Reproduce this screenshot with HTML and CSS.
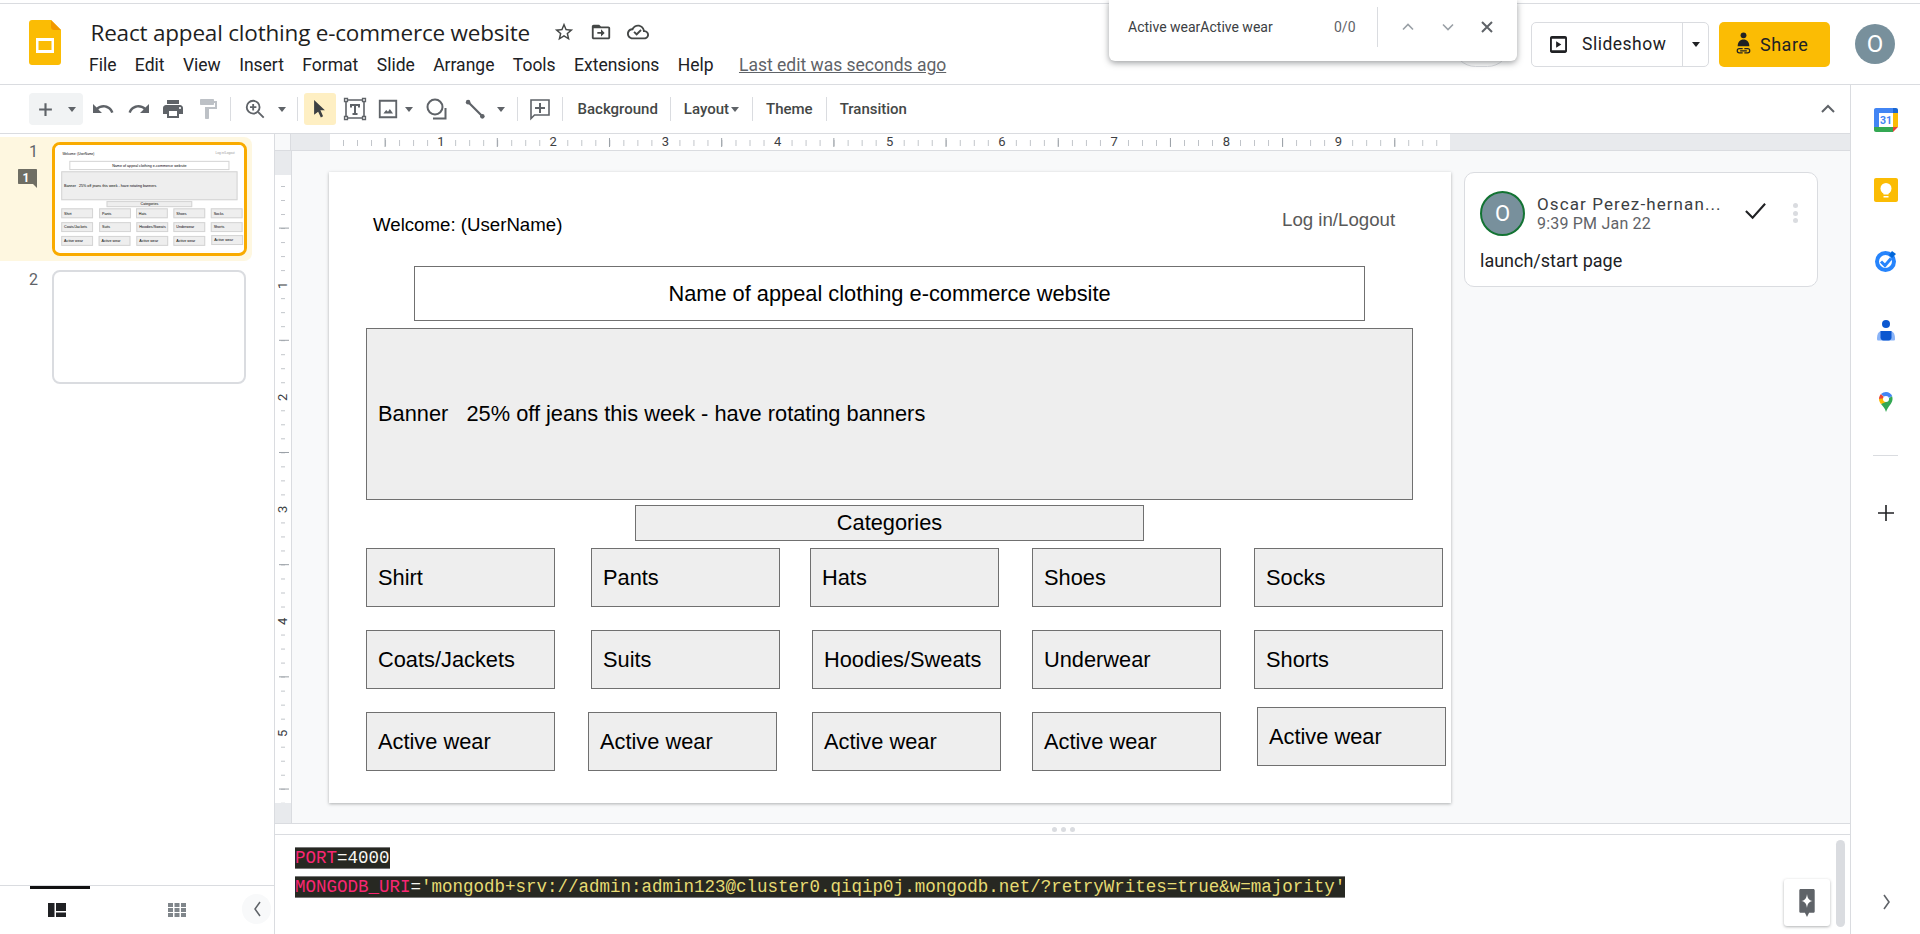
FILE: index.html
```html
<!DOCTYPE html>
<html lang="en">
<head>
  <meta charset="UTF-8" />
  <meta name="viewport" content="width=device-width, initial-scale=1" />
  <title>React appeal clothing e-commerce website - Google Slides</title>
  <link rel="stylesheet" href="styles.css">
</head>
<body>
  <header class="header">
    <svg class="logo" viewBox="0 0 32 45"><path fill="#fbbc04" d="M3 0h19l10 10v32c0 1.700-1.300 3-3 3H3c-1.700 0-3-1.300-3-3V3c0-1.700 1.300-3 3-3z"/><path fill="#f29900" d="M22 0v7c0 1.700 1.300 3 3 3h7z"/><path fill="#fff" d="M7 18h18v15H7zm2.500 3v9h13v-9z"/></svg>
    <div class="doc">
      <div class="doc-title">
        <span class="doc-name">React appeal clothing e-commerce website</span>
        <svg class="doc-icon" viewBox="0 0 24 24"><path fill="#444746" d="M22 9.240l-7.190-.620L12 2 9.190 8.630 2 9.240l5.460 4.730L5.820 21 12 17.270 18.180 21l-1.630-7.030L22 9.240zM12 15.400l-3.760 2.270 1-4.280-3.320-2.880 4.380-.380L12 6.100l1.710 4.040 4.380.380-3.320 2.880 1 4.280L12 15.400z"/></svg>
        <svg class="doc-icon" viewBox="0 0 24 24"><path fill="#444746" d="M20 6h-8l-2-2H4c-1.100 0-2 .900-2 2v12c0 1.100.900 2 2 2h16c1.100 0 2-.900 2-2V8c0-1.100-.900-2-2-2zm0 12H4V8h16v10zm-8-1l4-4-4-4v3H8v2h4v3z"/></svg>
        <svg class="doc-icon" viewBox="0 0 24 24"><path fill="#444746" d="M19.350 10.040C18.670 6.590 15.640 4 12 4 9.110 4 6.600 5.640 5.350 8.040 2.340 8.360 0 10.910 0 14c0 3.310 2.690 6 6 6h13c2.760 0 5-2.240 5-5 0-2.640-2.050-4.780-4.650-4.960zM19 18H6c-2.210 0-4-1.790-4-4s1.790-4 4-4h.710C7.370 7.690 9.480 6 12 6c3.040 0 5.500 2.460 5.500 5.500v.500H19c1.660 0 3 1.340 3 3s-1.340 3-3 3zm-8.500-2L7 12.500l1.400-1.400 2.100 2.100 4.100-4.100L16 10.500 10.500 16z"/></svg>
      </div>
      <nav class="menu">
        <span>File</span><span>Edit</span><span>View</span><span>Insert</span><span>Format</span><span>Slide</span><span>Arrange</span><span>Tools</span><span>Extensions</span><span>Help</span>
        <a class="last-edit">Last edit was seconds ago</a>
      </nav>
    </div>
    <div class="header-right">
      <div class="comment-hist"></div>
      <div class="slideshow">
        <span class="slideshow-main">
          <svg class="slideshow-icon" viewBox="0 0 18 18"><path fill="#202124" d="M2 0h14c1.100 0 2 .900 2 2v14c0 1.100-.900 2-2 2H2c-1.100 0-2-.900-2-2V2C0 .900.900 0 2 0zm0 3v12h14V3zm4.500 2.500L12 9l-5.500 3.500z"/></svg>
          Slideshow
        </span>
        <span class="slideshow-drop"><i class="caret caret-dark"></i></span>
      </div>
      <div class="share">
        <svg class="share-icon" viewBox="0 0 20 30"><circle cx="10" cy="4" r="3.500" fill="#202124"/><path fill="#202124" d="M3 17c0-5 3-8 7-8s7 3 7 8z"/><path fill="none" stroke="#202124" stroke-width="1.500" d="M9 20H5a2.500 2.500 0 0 0 0 5h4M11 20h4a2.500 2.500 0 0 1 0 5h-4M6 22.500h8"/></svg>
        Share
      </div>
      <div class="avatar">O</div>
    </div>
    <div class="find-popup">
      <span class="find-text">Active wearActive wear</span>
      <span class="find-count">0/0</span>
      <span class="find-sep"></span>
      <svg class="find-arrow" viewBox="0 0 14 14"><path fill="none" stroke="#9aa0a6" stroke-width="1.600" d="M2 9.500l5-5 5 5"/></svg>
      <svg class="find-arrow" viewBox="0 0 14 14"><path fill="none" stroke="#9aa0a6" stroke-width="1.600" d="M2 4.500l5 5 5-5"/></svg>
      <svg class="find-close" viewBox="0 0 14 14"><path fill="none" stroke="#5f6368" stroke-width="2" d="M2 2l10 10M12 2L2 12"/></svg>
    </div>
  </header>

  <div class="app">
    <div class="workspace">
      <div class="toolbar">
        <div class="add-btn">
          <svg class="ic-add" viewBox="0 0 16 16"><path fill="#5f6368" d="M7 2h2v5h5v2H9v5H7V9H2V7h5z"/></svg>
          <i class="caret"></i>
        </div>
        <svg class="ic ic-undo" viewBox="0 0 24 24"><path fill="#5f6368" d="M12.500 8c-2.650 0-5.050.990-6.900 2.600L2 7v9h9l-3.620-3.620c1.390-1.160 3.160-1.880 5.120-1.880 3.540 0 6.550 2.310 7.600 5.500l2.370-.780C21.080 11.030 17.150 8 12.500 8z"/></svg>
        <svg class="ic ic-redo" viewBox="0 0 24 24"><path fill="#5f6368" d="M18.400 10.600C16.550 8.990 14.150 8 11.500 8c-4.650 0-8.580 3.030-9.960 7.220L3.900 16c1.050-3.190 4.050-5.500 7.600-5.500 1.950 0 3.730.720 5.120 1.880L13 16h9V7l-3.600 3.600z"/></svg>
        <svg class="ic ic-print" viewBox="0 0 24 24"><path fill="#5f6368" d="M19 8H5c-1.660 0-3 1.340-3 3v6h4v4h12v-4h4v-6c0-1.660-1.340-3-3-3zm-3 11H8v-5h8v5zm3-7c-.550 0-1-.450-1-1s.450-1 1-1 1 .450 1 1-.450 1-1 1zm-1-9H6v4h12V3z"/></svg>
        <svg class="ic ic-paint" viewBox="0 0 24 24"><path fill="#bdc1c6" d="M18 4V3c0-.550-.450-1-1-1H5c-.550 0-1 .450-1 1v4c0 .550.450 1 1 1h12c.550 0 1-.450 1-1V6h1v4H9v11c0 .550.450 1 1 1h2c.550 0 1-.450 1-1v-9h8V4h-3z"/></svg>
        <span class="sep sep-a"></span>
        <svg class="ic ic-zoom" viewBox="0 0 24 24"><path fill="none" stroke="#5f6368" stroke-width="2" d="M15.500 15.500L21.500 21.500M10 6.500v7M6.500 10h7"/><circle cx="10" cy="10" r="7" fill="none" stroke="#5f6368" stroke-width="2"/></svg>
        <i class="caret caret-zoom"></i>
        <span class="sep sep-b"></span>
        <div class="select-btn">
          <svg class="ic-cursor" viewBox="0 0 14 20"><path fill="#3c4043" d="M1 0l12 11.500H8l3 6.500-2.500 1.500L5.500 13 1 16.500z"/></svg>
        </div>
        <svg class="ic ic-text" viewBox="0 0 24 24"><path fill="none" stroke="#5f6368" stroke-width="1.600" d="M4 3h16M4 21h16M3 4v16M21 4v16"/><path fill="#5f6368" d="M7 7h10v3.500h-2V9h-2v7h1.500v2h-5v-2H11V9H9v1.500H7z"/><path fill="#fff" stroke="#5f6368" stroke-width="1.300" d="M1.500 1.500h3v3h-3zM19.500 1.500h3v3h-3zM1.500 19.500h3v3h-3zM19.500 19.500h3v3h-3z"/></svg>
        <svg class="ic ic-image" viewBox="0 0 24 24"><path fill="none" stroke="#5f6368" stroke-width="2" d="M3 3h18v18H3z"/><path fill="#5f6368" d="M7 17l3-4 2 2 2-3 3.500 5z"/></svg>
        <i class="caret caret-image"></i>
        <svg class="ic ic-shape" viewBox="0 0 24 24"><circle cx="10" cy="10" r="7.500" fill="none" stroke="#5f6368" stroke-width="2"/><path fill="none" stroke="#5f6368" stroke-width="2" d="M20.500 11v10.500H8"/></svg>
        <svg class="ic ic-line" viewBox="0 0 24 24"><path fill="none" stroke="#5f6368" stroke-width="2.400" d="M5 5l15 15"/><circle cx="4.500" cy="4.500" r="2.500" fill="#5f6368"/><circle cx="20" cy="20" r="2.500" fill="#5f6368"/></svg>
        <i class="caret caret-line"></i>
        <span class="sep sep-c"></span>
        <svg class="ic ic-comment" viewBox="0 0 24 24"><path fill="none" stroke="#5f6368" stroke-width="1.600" d="M3 3h18v15H6.500L3 21.500z"/><path fill="#5f6368" d="M11 6h2v4h4v2h-4v4h-2v-4H7v-2h4z"/></svg>
        <span class="sep sep-d"></span>
        <span class="tb-label tb-background">Background</span>
        <span class="sep"></span>
        <span class="tb-label tb-layout">Layout</span>
        <i class="caret caret-layout"></i>
        <span class="sep sep-e"></span>
        <span class="tb-label">Theme</span>
        <span class="sep"></span>
        <span class="tb-label">Transition</span>
        <svg class="collapse" viewBox="0 0 16 16"><path fill="none" stroke="#5f6368" stroke-width="2" d="M2 11l6-6 6 6"/></svg>
      </div>

      <div class="main">
        <aside class="filmstrip">
          <div class="film-list">
            <div class="film-row film-row-active">
              <div class="film-num">
                <span>1</span>
                <svg class="film-badge" viewBox="0 0 19 19"><path fill="#6f6e64" d="M1 0h17c.600 0 1 .400 1 1v18l-4-4H1c-.600 0-1-.400-1-1V1c0-.600.400-1 1-1z"/><text x="8" y="12.500" class="film-badge-text">1</text></svg>
              </div>
              <div class="thumb thumb-active">
                <div class="slide thumb-slide">
                  <span class="free welcome">Welcome: (UserName)</span>
                  <span class="free login">Log in/Logout</span>
                  <div class="shape site-name center">Name of appeal clothing e-commerce website</div>
                  <div class="shape grey banner">Banner   25% off jeans this week - have rotating banners</div>
                  <div class="shape grey categories center">Categories</div>
                  <div class="shape grey cell r1 c1">Shirt</div>
                  <div class="shape grey cell r1 c2">Pants</div>
                  <div class="shape grey cell r1 c3">Hats</div>
                  <div class="shape grey cell r1 c4">Shoes</div>
                  <div class="shape grey cell r1 c5">Socks</div>
                  <div class="shape grey cell r2 c1">Coats/Jackets</div>
                  <div class="shape grey cell r2 c2">Suits</div>
                  <div class="shape grey cell r2 c3b">Hoodies/Sweats</div>
                  <div class="shape grey cell r2 c4">Underwear</div>
                  <div class="shape grey cell r2 c5">Shorts</div>
                  <div class="shape grey cell r3 c1">Active wear</div>
                  <div class="shape grey cell r3 c2b">Active wear</div>
                  <div class="shape grey cell r3 c3b">Active wear</div>
                  <div class="shape grey cell r3 c4">Active wear</div>
                  <div class="shape grey cell r3b c5b">Active wear</div>
                </div>
              </div>
            </div>
            <div class="film-row">
              <div class="film-num"><span>2</span></div>
              <div class="thumb"></div>
            </div>
          </div>
          <div class="film-foot">
            <span class="film-tab-bar"></span>
            <svg class="film-view film-view-a" viewBox="0 0 18 14"><path fill="#202124" d="M0 0h6.500v14H0zM8 0h10v8H8zM8 9.500h10V14H8z"/></svg>
            <svg class="film-view film-view-b" viewBox="0 0 18 14"><path fill="#80868b" d="M0 0h5v4H0zM6.500 0h5v4h-5zM13 0h5v4h-5zM0 5h5v4H0zM6.500 5h5v4h-5zM13 5h5v4h-5zM0 10h5v4H0zM6.500 10h5v4h-5zM13 10h5v4h-5z"/></svg>
            <span class="film-collapse"><svg viewBox="0 0 10 18"><path fill="none" stroke="#5f6368" stroke-width="1.500" d="M8 2L3 9l5 7"/></svg></span>
          </div>
        </aside>

        <section class="editor">
          <div class="ruler-h">
            <span class="ruler-corner"></span>
            <div class="ruler-h-track">
              <span>1</span><span>2</span><span>3</span><span>4</span><span>5</span><span>6</span><span>7</span><span>8</span><span>9</span>
            </div>
          </div>
          <div class="editor-body">
            <div class="ruler-v">
              <span>1</span><span>2</span><span>3</span><span>4</span><span>5</span>
            </div>
            <div class="canvas">
              <div class="slide">
                <span class="free welcome">Welcome: (UserName)</span>
                <span class="free login">Log in/Logout</span>
                <div class="shape site-name center">Name of appeal clothing e-commerce website</div>
                <div class="shape grey banner">Banner   25% off jeans this week - have rotating banners</div>
                <div class="shape grey categories center">Categories</div>
                <div class="shape grey cell r1 c1">Shirt</div>
                <div class="shape grey cell r1 c2">Pants</div>
                <div class="shape grey cell r1 c3">Hats</div>
                <div class="shape grey cell r1 c4">Shoes</div>
                <div class="shape grey cell r1 c5">Socks</div>
                <div class="shape grey cell r2 c1">Coats/Jackets</div>
                <div class="shape grey cell r2 c2">Suits</div>
                <div class="shape grey cell r2 c3b">Hoodies/Sweats</div>
                <div class="shape grey cell r2 c4">Underwear</div>
                <div class="shape grey cell r2 c5">Shorts</div>
                <div class="shape grey cell r3 c1">Active wear</div>
                <div class="shape grey cell r3 c2b">Active wear</div>
                <div class="shape grey cell r3 c3b">Active wear</div>
                <div class="shape grey cell r3 c4">Active wear</div>
                <div class="shape grey cell r3b c5b">Active wear</div>
              </div>
              <div class="comment">
                <div class="comment-head">
                  <div class="comment-avatar"><span>O</span></div>
                  <div class="comment-who">
                    <div class="comment-name">Oscar Perez-hernan...</div>
                    <div class="comment-time">9:39 PM Jan 22</div>
                  </div>
                  <svg class="comment-check" viewBox="0 0 24 24"><path fill="none" stroke="#202124" stroke-width="2.200" d="M2 12.500L9 19.500 22 5"/></svg>
                  <span class="comment-more"><i></i><i></i><i></i></span>
                </div>
                <div class="comment-body">launch/start page</div>
              </div>
            </div>
          </div>
          <div class="resizer"><i></i><i></i><i></i></div>
          <div class="notes">
            <p class="note-line"><span class="k">PORT</span>=4000</p>
            <p class="note-line"><span class="k">MONGODB_URI</span>=<span class="v">'mongodb+srv://admin:admin123@cluster0.qiqip0j.mongodb.net/?retryWrites=true&amp;w=majority'</span></p>
            <span class="notes-scroll"></span>
            <span class="notes-fab">
              <svg viewBox="0 0 22 40"><path fill="#5f6368" d="M2 0h18c1.100 0 2 .900 2 2v30c0 1.100-.900 2-2 2h-6l-3 6-3-6H2c-1.100 0-2-.900-2-2V2C0 .900.900 0 2 0z"/><path fill="#fff" d="M11 7c.800 6 2.500 9 8 10-5.500 1-7.200 4-8 10-.800-6-2.500-9-8-10 5.500-1 7.200-4 8-10z"/></svg>
            </span>
          </div>
        </section>
      </div>
    </div>

    <aside class="sidebar">
      <svg class="side-icon side-cal" viewBox="0 0 24 24"><path fill="#4285f4" d="M2 0h17v5H5v14H0V2C0 .900.900 0 2 0z"/><path fill="#1967d2" d="M19 0h3c1.100 0 2 .900 2 2v3h-5z"/><path fill="#fbbc04" d="M19 5h5v14h-5z"/><path fill="#34a853" d="M0 19h19v5H2c-1.100 0-2-.900-2-2z"/><path fill="#ea4335" d="M19 24v-5h5z"/><path fill="#fff" d="M5 5h14v14H5z"/><text x="12" y="16" class="side-cal-text">31</text></svg>
      <svg class="side-icon side-keep" viewBox="0 0 24 24"><path fill="#fbbc04" d="M2 0h20c1.100 0 2 .900 2 2v20c0 1.100-.900 2-2 2H2c-1.100 0-2-.900-2-2V2C0 .900.900 0 2 0z"/><circle cx="12" cy="10.500" r="5.500" fill="#fff"/><path fill="#fff" d="M9.500 14h5v2.500h-5zM9.500 18h5v1.500h-5z"/></svg>
      <svg class="side-icon side-tasks" viewBox="0 0 24 24"><circle cx="11.500" cy="12.500" r="8.500" fill="none" stroke="#2684fc" stroke-width="4"/><path fill="none" stroke="#2684fc" stroke-width="3" d="M7 12.500l4 4 6-7"/><path fill="#0066da" d="M18 2l4 3-4 4-3-3z"/></svg>
      <svg class="side-icon side-contacts" viewBox="0 0 24 24"><circle cx="12" cy="5" r="4" fill="#0b57d0"/><path fill="#8ab4f8" d="M3 20c0-4 1-8 5-8h8c4 0 5 4 5 8 0 1-.500 1.500-1.500 1.500h-15C3.500 21.500 3 21 3 20z"/><path fill="#0b57d0" d="M6.500 12h11v6.500c0 1.500-1 3-3 3h-5c-2 0-3-1.500-3-3z"/></svg>
      <svg class="side-icon side-maps" viewBox="0 0 24 24"><path fill="#34a853" d="M12 24c-1-4-3.500-6-5-8l11-8c1.500 4-.500 7-2 9-1.500 2-3 4-4 7z"/><path fill="#fbbc04" d="M7 16c-1-1.300-2-3-2-5l4-2 3 5z"/><path fill="#ea4335" d="M5 11c0-2 .800-3.600 2-4.900L11 10z"/><path fill="#4285f4" d="M7 6.100C8.500 4.700 10.200 4 12 4c3 0 5.200 1.700 6.200 4L13 11z"/><circle cx="12" cy="11" r="3" fill="#fff"/></svg>
      <span class="side-sep"></span>
      <svg class="side-plus" viewBox="0 0 16 16"><path fill="#202124" d="M7.200 0h1.600v7.200H16v1.600H8.800V16H7.200V8.800H0V7.200h7.200z"/></svg>
      <svg class="side-expand" viewBox="0 0 10 18"><path fill="none" stroke="#5f6368" stroke-width="1.600" d="M2 2l5 7-5 7"/></svg>
    </aside>
  </div>
</body>
</html>
```

FILE: styles.css
```css
* {
  box-sizing: border-box;
}
html, body {
  margin: 0;
  height: 934px;
  overflow: hidden;
}
body {
  font-family: Roboto, 'Noto Sans', sans-serif;
  color: #202124;
  background: #fff;
  padding-top: 3px;
  display: flex;
  flex-direction: column;
}

/* top header */
.header {
  position: relative;
  flex: none;
  height: 82px;
  border-top: 1px solid #dadce0;
  border-bottom: 1px solid #dadce0;
  display: flex;
  align-items: center;
  padding-left: 29px;
}
.logo {
  width: 32px;
  height: 45px;
  flex: none;
  margin-top: -4px;
}
.doc {
  margin-left: 28px;
  align-self: flex-start;
}
.doc-title {
  height: 28px;
  margin-top: 14px;
  display: flex;
  align-items: center;
}
.doc-name {
  font-family: 'Open Sans', sans-serif;
  font-size: 22.5px;
  letter-spacing: -0.2px;
  margin-left: 1.5px;
  color: #1f1f1f;
}
.doc-icon {
  width: 22px;
  height: 22px;
  margin-left: 15px;
}
.doc-name + .doc-icon {
  margin-left: 23px;
}
.menu {
  display: flex;
  align-items: center;
  gap: 18.4px;
  height: 24px;
  margin-top: 7px;
  font-size: 17.5px;
}
.last-edit {
  margin-left: 7px;
  color: #5f6368;
  text-decoration: underline;
}
.header-right {
  margin-left: auto;
  display: flex;
  align-items: center;
  padding-right: 25px;
  position: relative;
}
.comment-hist {
  position: absolute;
  left: -78px;
  top: 0;
  width: 57px;
  height: 45px;
  border: 1px solid #dadce0;
  border-radius: 28px;
}
.slideshow {
  width: 178px;
  height: 45px;
  display: flex;
  border: 1px solid #dadce0;
  border-radius: 5px;
  font-size: 17.5px;
}
.slideshow-main {
  width: 151px;
  display: flex;
  align-items: center;
  letter-spacing: 0.5px;
  padding-left: 18px;
  gap: 15px;
  border-right: 1px solid #dadce0;
}
.slideshow-icon {
  width: 17px;
  height: 17px;
}
.slideshow-drop {
  flex: 1;
  display: flex;
  align-items: center;
  justify-content: center;
}
.share {
  width: 111px;
  height: 45px;
  margin-left: 10px;
  background: #fbbc04;
  border-radius: 5px;
  display: flex;
  align-items: center;
  font-size: 18px;
  letter-spacing: 0.5px;
  padding-left: 16px;
  gap: 8px;
}
.share-icon {
  width: 17px;
  height: 25px;
}
.avatar {
  width: 40px;
  height: 40px;
  margin-left: 25px;
  border-radius: 50%;
  background: #78909c;
  color: #fff;
  font-size: 24px;
  display: flex;
  align-items: center;
  justify-content: center;
}

/* find popup lies over the header */
.find-popup {
  position: absolute;
  left: 1109px;
  top: -4px;
  width: 408px;
  height: 61px;
  background: #fff;
  border-radius: 0 0 6px 6px;
  box-shadow: 0 2px 6px rgba(60, 64, 67, 0.5);
  display: flex;
  align-items: center;
  padding: 0 0 7px 19px;
  font-size: 14px;
  z-index: 5;
}
.find-text {
  width: 206px;
  color: #3c4043;
}
.find-count {
  width: 43px;
  color: #5f6368;
}
.find-sep {
  width: 1px;
  height: 40px;
  background: #dadce0;
}
.find-arrow {
  width: 14px;
  height: 14px;
  margin-left: 23px;
}
.find-arrow + .find-arrow {
  margin-left: 26px;
}
.find-close {
  width: 14px;
  height: 14px;
  margin-left: 25px;
}

/* page below the header */
.app {
  flex: 1;
  min-height: 0;
  display: flex;
}
.workspace {
  width: 1850px;
  flex: none;
  display: flex;
  flex-direction: column;
  min-height: 0;
}

/* toolbar */
.toolbar {
  flex: none;
  height: 49px;
  border-bottom: 1px solid #dadce0;
  display: flex;
  align-items: center;
  padding-left: 29px;
}
.add-btn {
  width: 54px;
  height: 32px;
  background: #f1f3f4;
  border-radius: 4px;
  display: flex;
  align-items: center;
  padding-left: 8px;
}
.ic-add {
  width: 17px;
  height: 17px;
}
.add-btn .caret {
  margin-left: 14px;
}
.ic {
  flex: none;
  width: 24px;
  height: 24px;
}
.caret {
  display: inline-block;
  width: 0;
  height: 0;
  flex: none;
  border-left: 4.5px solid transparent;
  border-right: 4.5px solid transparent;
  border-top: 5px solid #5f6368;
}
.caret-dark {
  border-top-color: #202124;
}
.ic-undo { margin-left: 8px; }
.ic-redo { margin-left: 12px; }
.ic-print { margin-left: 10px; }
.ic-paint { margin-left: 11px; }
.sep {
  flex: none;
  width: 1px;
  height: 24px;
  background: #dadce0;
  margin: 0 13px;
}
.sep-a { margin: 0 0 0 10px; }
.ic-zoom { margin-left: 13px; width: 22px; height: 22px; }
.caret-zoom { margin-left: 11.5px; }
.sep-b { margin: 0 0 0 11px; }
.select-btn {
  flex: none;
  width: 32px;
  height: 32px;
  margin-left: 6px;
  background: #feefc3;
  border-radius: 3px;
  display: flex;
  align-items: center;
  justify-content: center;
}
.ic-cursor {
  width: 13px;
  height: 18px;
}
.ic-text { margin-left: 7px; }
.ic-image { margin-left: 10px; width: 22px; height: 22px; }
.caret-image { margin-left: 6px; }
.ic-shape { margin-left: 12px; }
.ic-line { margin-left: 15px; width: 22px; height: 22px; }
.caret-line { margin-left: 11px; }
.sep-c { margin: 0 0 0 12px; }
.ic-comment { margin-left: 10.5px; }
.sep-d { margin: 0 15px 0 9.5px; }
.tb-label {
  font-size: 15px;
  font-weight: 500;
  color: #444746;
}
.tb-background { margin-right: -1px; }
.caret-layout { margin-left: 2px; }
.sep-e { margin: 0 13px 0 13px; }
.collapse {
  width: 16px;
  height: 16px;
  margin-left: auto;
  margin-right: 14px;
}

/* slide list */
.main {
  flex: 1;
  min-height: 0;
  display: flex;
}
.filmstrip {
  width: 274px;
  flex: none;
  display: flex;
  flex-direction: column;
}
.film-list {
  flex: 1;
  padding-top: 3px;
}
.film-row {
  width: 252px;
  height: 124px;
  display: flex;
  padding-top: 5px;
  border-radius: 0 8px 8px 0;
}
.film-row + .film-row {
  margin-top: 4px;
}
.film-row-active {
  background: #fef7e0;
}
.film-num {
  width: 52px;
  flex: none;
  font-size: 16px;
  color: #5f6368;
  position: relative;
  text-align: right;
  padding-right: 14px;
}
.film-num span {
  display: block;
  line-height: 20px;
}
.film-badge {
  position: absolute;
  left: 18px;
  top: 27px;
  width: 19px;
  height: 19px;
}
.film-badge-text {
  fill: #fff;
  font-size: 12px;
  font-weight: 700;
  text-anchor: middle;
  font-family: Roboto, sans-serif;
}
.thumb {
  flex: none;
  width: 194px;
  height: 114px;
  background: #fff;
  border: 2px solid #dadce0;
  border-radius: 8px;
  overflow: hidden;
}
.thumb-active {
  width: 195px;
  border: 3px solid #f9ab00;
}
.thumb-slide {
  transform: scale(0.1684);
  transform-origin: 0 0;
  box-shadow: none;
  color: #777;
}
.thumb-slide .shape {
  border: 6px solid #d4d4d4;
}
.thumb-slide .login {
  color: #999;
}
.film-foot {
  flex: none;
  position: relative;
  height: 49px;
  border-top: 1px solid #dadce0;
}
.film-tab-bar {
  position: absolute;
  left: 30px;
  top: 0;
  width: 60px;
  height: 3px;
  background: #111;
}
.film-view {
  position: absolute;
  top: 17px;
  width: 18px;
  height: 14px;
}
.film-view-a { left: 48px; }
.film-view-b { left: 168px; }
.film-collapse {
  position: absolute;
  left: 242px;
  top: 8px;
  width: 29px;
  height: 30px;
  border-radius: 15px;
  background: #f8f9fa;
  display: flex;
  align-items: center;
  justify-content: center;
}
.film-collapse svg {
  width: 10px;
  height: 18px;
}

/* editor */
.editor {
  flex: 1;
  min-width: 0;
  display: flex;
  flex-direction: column;
  border-left: 1px solid #dadce0;
}
.ruler-h {
  flex: none;
  height: 17px;
  display: flex;
  border-bottom: 1px solid #dadce0;
  background: #e8eaed;
}
.ruler-corner {
  width: 16px;
  flex: none;
  background: #f8f9fa;
  border-right: 1px solid #dadce0;
}
.ruler-h-track {
  margin-left: 39px;
  width: 1120px;
  padding-left: 104px;
  background-color: #fff;
  background-image:
    linear-gradient(90deg, transparent 55px, #9aa0a6 55px, #9aa0a6 56px, transparent 56px),
    linear-gradient(90deg, transparent 13px, #bdc1c6 13px, #bdc1c6 14px, transparent 14px);
  background-size: 112.2px 9px, 14.025px 6px;
  background-position: 0 4px, 0 6px;
  background-repeat: repeat-x;
  display: flex;
  align-items: center;
}
.ruler-h-track span {
  flex: none;
  width: 14px;
  margin-right: 98.2px;
  text-align: center;
  font-size: 13px;
  line-height: 16px;
  color: #3c4043;
  background: #fff;
}
.editor-body {
  flex: 1;
  min-height: 0;
  display: flex;
}
.ruler-v {
  width: 17px;
  flex: none;
  border-right: 1px solid #dadce0;
  background-color: #e8eaed;
  position: relative;
}
.ruler-v::before {
  content: "";
  position: absolute;
  left: 0;
  right: 0;
  top: 24px;
  height: 628px;
  background-color: #fff;
  background-image:
    linear-gradient(180deg, transparent 55px, #9aa0a6 55px, #9aa0a6 56px, transparent 56px),
    linear-gradient(180deg, transparent 13px, #bdc1c6 13px, #bdc1c6 14px, transparent 14px);
  background-size: 10px 112.2px, 4px 14.025px;
  background-position: 4px -2px, 6px -2px;
  background-repeat: no-repeat repeat;
}
.ruler-v span {
  position: absolute;
  left: 0;
  width: 16px;
  height: 14px;
  line-height: 16px;
  text-align: center;
  font-size: 13px;
  color: #3c4043;
  background: #fff;
  writing-mode: vertical-rl;
  transform: rotate(180deg);
}
.ruler-v span:nth-child(1) { top: 127px; }
.ruler-v span:nth-child(2) { top: 239px; }
.ruler-v span:nth-child(3) { top: 351px; }
.ruler-v span:nth-child(4) { top: 463px; }
.ruler-v span:nth-child(5) { top: 575px; }
.canvas {
  flex: 1;
  min-width: 0;
  background: #f8f9fa;
  display: flex;
  align-items: flex-start;
  padding: 21px 0 0 37px;
}

/* slide: a free canvas, shapes sit at their own coordinates */
.slide {
  position: relative;
  flex: none;
  width: 1122px;
  height: 631px;
  background: #fff;
  box-shadow: 0 1px 3px rgba(60, 64, 67, 0.4);
  font-family: 'Liberation Sans', Arial, sans-serif;
  font-size: 21.8px;
  color: #000;
}
.free {
  position: absolute;
  line-height: 24px;
  white-space: pre;
}
.welcome {
  left: 44px;
  top: 41px;
  font-size: 18.67px;
}
.login {
  left: 953px;
  top: 36px;
  font-size: 18.67px;
  color: #595959;
}
.shape {
  position: absolute;
  display: flex;
  align-items: center;
  padding-left: 11px;
  border: 1.5px solid #707070;
  white-space: pre;
}
.center {
  justify-content: center;
  padding-left: 0;
}
.grey {
  background: #eee;
}
.site-name { left: 85px; top: 94px; width: 951px; height: 55px; }
.banner { left: 37px; top: 156px; width: 1047px; height: 172px; }
.categories { left: 306px; top: 333px; width: 509px; height: 36px; }
.cell { width: 189px; height: 59px; }
.r1 { top: 376px; }
.r2 { top: 458px; }
.r3 { top: 540px; }
.r3b { top: 535px; }
.c1 { left: 37px; }
.c2 { left: 262px; }
.c2b { left: 259px; }
.c3 { left: 481px; }
.c3b { left: 483px; }
.c4 { left: 703px; }
.c5 { left: 925px; }
.c5b { left: 928px; }

/* comment card */
.comment {
  flex: none;
  width: 354px;
  height: 115px;
  margin-left: 13px;
  background: #fff;
  border: 1px solid #dadce0;
  border-radius: 10px;
  padding: 18px 14px 0 15px;
}
.comment-head {
  display: flex;
  align-items: flex-start;
}
.comment-avatar {
  width: 45px;
  height: 45px;
  flex: none;
  border-radius: 50%;
  border: 2px solid #137333;
  background: #78909c;
  color: #fff;
  font-size: 22px;
  display: flex;
  align-items: center;
  justify-content: center;
}
.comment-who {
  margin-left: 12px;
  width: 185px;
  flex: none;
}
.comment-name {
  font-size: 17px;
  line-height: 20px;
  letter-spacing: 1.1px;
  color: #3c4043;
  margin-top: 3px;
  white-space: nowrap;
}
.comment-time {
  font-size: 16px;
  line-height: 18px;
  letter-spacing: 0.2px;
  color: #5f6368;
  margin-top: 1px;
  white-space: nowrap;
}
.comment-check {
  width: 23px;
  height: 23px;
  margin: 8px 0 0 22px;
  flex: none;
}
.comment-more {
  margin: 12px 0 0 26px;
  display: flex;
  flex-direction: column;
  gap: 2.5px;
}
.comment-more i {
  width: 5px;
  height: 5px;
  border-radius: 50%;
  background: #dadce0;
}
.comment-body {
  margin-top: 15px;
  font-size: 18px;
  line-height: 20px;
}

/* resizer and speaker notes */
.resizer {
  flex: none;
  height: 12px;
  border-top: 1px solid #dadce0;
  border-bottom: 1px solid #dadce0;
  display: flex;
  align-items: center;
  justify-content: center;
  gap: 4px;
  padding-left: 2px;
}
.resizer i {
  width: 5px;
  height: 5px;
  border-radius: 50%;
  background: #dadce0;
}
.notes {
  flex: none;
  height: 99px;
  position: relative;
  padding: 12px 0 0 20px;
}
.note-line {
  margin: 0 0 7px;
  width: fit-content;
  height: 22px;
  line-height: 20px;
  background: #272822;
  border-top: 1px solid #777;
  border-bottom: 1px solid #777;
  color: #f8f8f2;
  font-family: 'Liberation Mono', monospace;
  font-size: 17.5px;
  white-space: pre;
}
.k { color: #f92672; }
.v { color: #e6db74; }
.notes-scroll {
  position: absolute;
  left: 1561px;
  top: 5px;
  width: 9px;
  height: 87px;
  border-radius: 5px;
  background: #dadce0;
}
.notes-fab {
  position: absolute;
  left: 1509px;
  top: 44px;
  width: 46px;
  height: 47px;
  background: #fff;
  border-radius: 3px;
  box-shadow: 0 1px 3px rgba(60, 64, 67, 0.4);
  display: flex;
  align-items: center;
  justify-content: center;
}
.notes-fab svg {
  width: 22px;
  height: 28px;
}

/* right side bar */
.sidebar {
  flex: 1;
  position: relative;
  border-left: 1px solid #dadce0;
  display: flex;
  flex-direction: column;
  align-items: center;
  padding-top: 23px;
}
.side-icon {
  width: 24px;
  height: 24px;
  flex: none;
}
.side-keep { margin-top: 46px; }
.side-tasks { margin-top: 47px; }
.side-contacts { margin-top: 46px; }
.side-maps { margin-top: 45px; }
.side-cal-text {
  fill: #4285f4;
  font-size: 10.5px;
  font-weight: 700;
  text-anchor: middle;
  font-family: Roboto, sans-serif;
}
.side-sep {
  width: 25px;
  height: 1px;
  margin-top: 43px;
  background: #dadce0;
}
.side-plus {
  width: 16px;
  height: 16px;
  margin-top: 49px;
}
.side-expand {
  position: absolute;
  left: 31px;
  bottom: 23px;
  width: 10px;
  height: 18px;
}
```
